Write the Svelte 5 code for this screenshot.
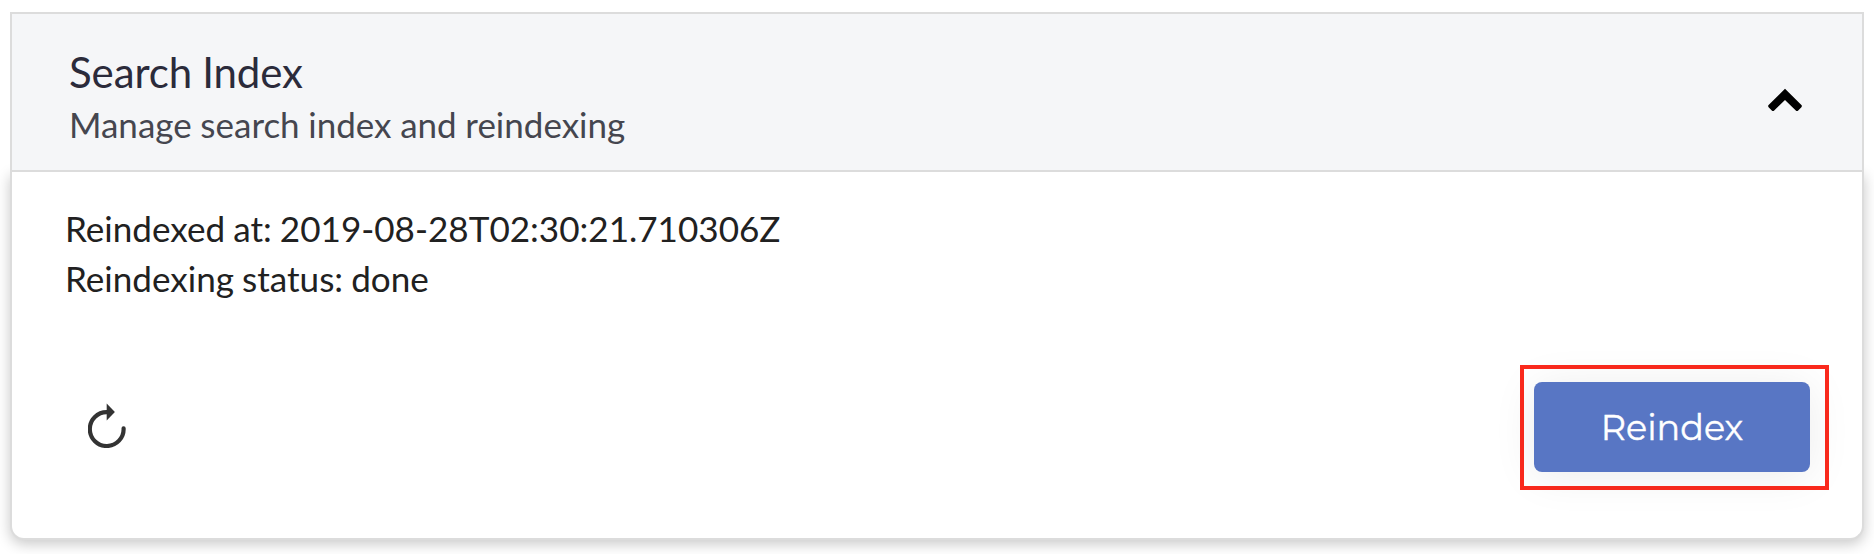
<script lang="ts">
	let open = $state(true);

	const reindexedAt = '2019-08-28T02:30:21.710306Z';
	const status = 'done';

	function toggle() {
		open = !open;
	}
</script>

<section class="panel">
	<button class="header" onclick={toggle} aria-expanded={open}>
		<span class="heading">
			<span class="title">Search Index</span>
			<span class="subtitle">Manage search index and reindexing</span>
		</span>
		<svg class="chevron" class:closed={!open} width="36" height="24" viewBox="0 0 36 24" aria-hidden="true">
			<path
				d="M18 0.8 L34.4 17 Q35.4 18.1 34.4 19.2 L31.2 22.4 Q30 23.4 28.8 22.4 L18 11.9 L7.2 22.4 Q6 23.4 4.8 22.4 L1.6 19.2 Q0.6 18.1 1.6 17 Z"
			/>
		</svg>
	</button>

	{#if open}
		<div class="body">
			<div class="info">
				<div>Reindexed at: {reindexedAt}</div>
				<div>Reindexing status: {status}</div>
			</div>
			<div class="actions">
				<button class="refresh" aria-label="Refresh">
					<svg width="40" height="46" viewBox="0 0 40 46">
						<path class="arc" d="M19 10.2 A16.9 16.9 0 1 0 35.6 26.4" />
						<path class="arrow" d="M18.7 1.6 V18.4 L26.9 10 Z" />
					</svg>
				</button>
				<div class="highlight">
					<button class="reindex">Reindex</button>
				</div>
			</div>
		</div>
	{/if}
</section>

<style>
	:global(body) {
		background: #fff;
		overflow: hidden;
	}

	.panel {
		box-sizing: border-box;
		height: 554px;
		padding: 12px 10px 14px;
		font-family: Lato, sans-serif;
		display: flex;
		flex-direction: column;
	}

	button {
		border: none;
		background: none;
		padding: 0;
		font-family: inherit;
		cursor: pointer;
	}

	.header {
		position: relative;
		z-index: 1;
		box-sizing: border-box;
		height: 160px;
		flex: none;
		display: flex;
		align-items: flex-start;
		justify-content: space-between;
		padding: 31px 59px 0 57px;
		border: 2px solid #dcdcdc;
		background: #f5f6f8;
		text-align: left;
	}

	.heading {
		display: flex;
		flex-direction: column;
		white-space: nowrap;
	}

	.title {
		font-size: 42px;
		line-height: 54px;
		letter-spacing: -0.1px;
		word-spacing: -0.5px;
		color: #2b2b3b;
	}

	.subtitle {
		font-size: 35px;
		line-height: 50px;
		word-spacing: -0.3px;
		color: #45464f;
	}

	.chevron {
		margin-top: 43px;
	}

	.chevron.closed {
		transform: rotate(180deg);
	}

	.body {
		box-sizing: border-box;
		flex: 1;
		display: flex;
		flex-direction: column;
		justify-content: space-between;
		padding: 31px 33px 48px 53px;
		border: 2px solid #dcdcdc;
		border-top: none;
		border-radius: 0 0 14px 14px;
		background: #fff;
		box-shadow: 0 4px 14px rgba(0, 0, 0, 0.22);
	}

	.info {
		font-size: 35.1px;
		line-height: 50px;
		word-spacing: -0.9px;
		color: #212121;
		white-space: nowrap;
	}

	.actions {
		display: flex;
		align-items: center;
		justify-content: space-between;
	}

	.refresh {
		display: flex;
		margin: 0 0 6px 23px;
	}

	.arc {
		fill: none;
		stroke: #333;
		stroke-width: 4.2;
		stroke-linecap: round;
	}

	.arrow {
		fill: #333;
	}

	.highlight {
		box-sizing: border-box;
		width: 309px;
		height: 125px;
		padding: 13px 15px 14px 10px;
		border: 4px solid #fb2a1d;
	}

	.reindex {
		width: 276px;
		height: 90px;
		border-radius: 8px;
		background: #5876c4;
		box-shadow: 0 4px 44px rgba(0, 0, 0, 0.08);
		color: #fff;
		font-family: Montserrat, Inter, sans-serif;
		font-size: 35px;
		-webkit-text-stroke: 0.4px #fff;
	}
</style>
